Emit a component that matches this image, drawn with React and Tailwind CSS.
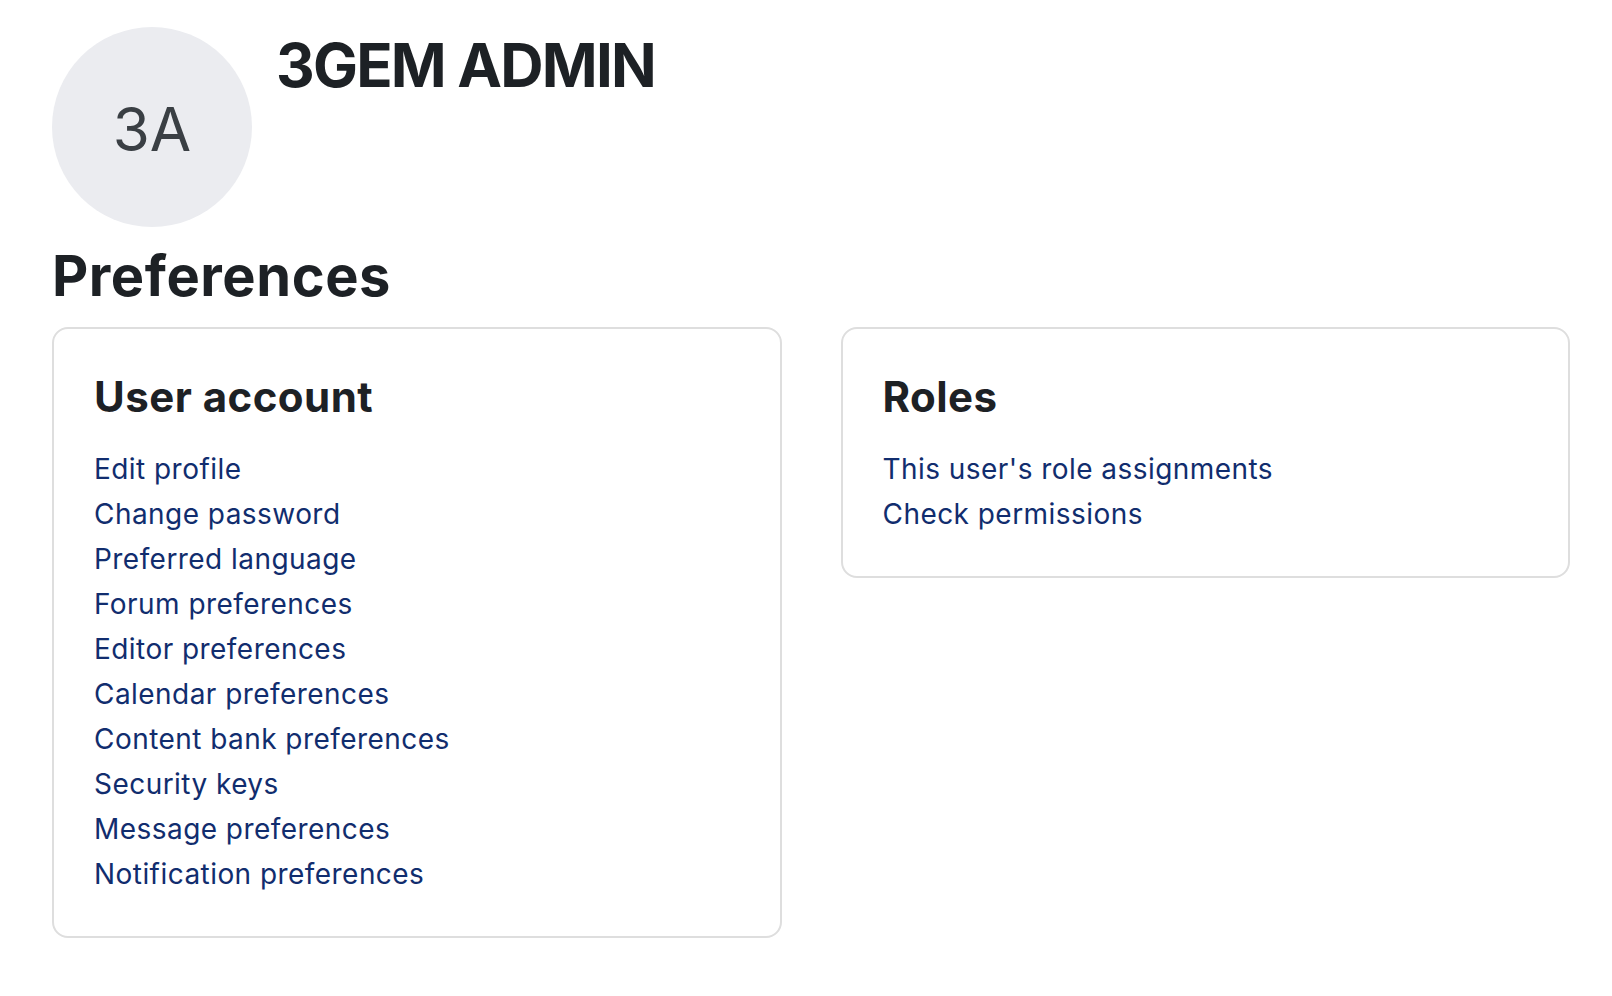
import React from 'react';

const accountLinks = [
  'Edit profile',
  'Change password',
  'Preferred language',
  'Forum preferences',
  'Editor preferences',
  'Calendar preferences',
  'Content bank preferences',
  'Security keys',
  'Message preferences',
  'Notification preferences',
];

const roleLinks = ["This user's role assignments", 'Check permissions'];

// One bordered block with a heading and a list of links
const PrefCard = ({ title, links }) => (
  <div className="self-start rounded-[16px] border-2 border-[#dedede] bg-white px-[40px] pt-[43px] pb-[39px]">
    <h3 className="text-[42px] leading-[50px] font-bold tracking-[0.011em] text-[#1d2125]">{title}</h3>
    <ul className="mt-[25px]">
      {links.map((link) => (
        <li key={link}>
          <a href="#" className="text-[28px] leading-[45px] tracking-[0.016em] text-[#112d6e] hover:underline">
            {link}
          </a>
        </li>
      ))}
    </ul>
  </div>
);

const App = () => {
  return (
    <div
      className="min-h-screen bg-white pt-[27px] pl-[52px] pr-[42px] text-[#1d2125]"
      style={{ fontFamily: 'Inter, "Noto Sans", "Liberation Sans", sans-serif' }}
    >
      {/* user header */}
      <div className="flex items-start gap-[24px]">
        <div className="flex h-[200px] w-[200px] shrink-0 items-center justify-center rounded-full bg-[#ebecf0] pt-[4px]">
          <span className="text-[60px] leading-none text-[#3a3f44]">3A</span>
        </div>
        <h1 className="mt-[2px] text-[60px] leading-[72px] font-bold tracking-[-0.03em]">3GEM ADMIN</h1>
      </div>

      <h2 className="mt-[16px] text-[56px] leading-[67px] font-bold tracking-[0.01em]">Preferences</h2>

      <div className="mt-[17px] grid grid-cols-2 items-start gap-[59px]">
        <PrefCard title="User account" links={accountLinks} />
        <PrefCard title="Roles" links={roleLinks} />
      </div>
    </div>
  );
};

export default App;
